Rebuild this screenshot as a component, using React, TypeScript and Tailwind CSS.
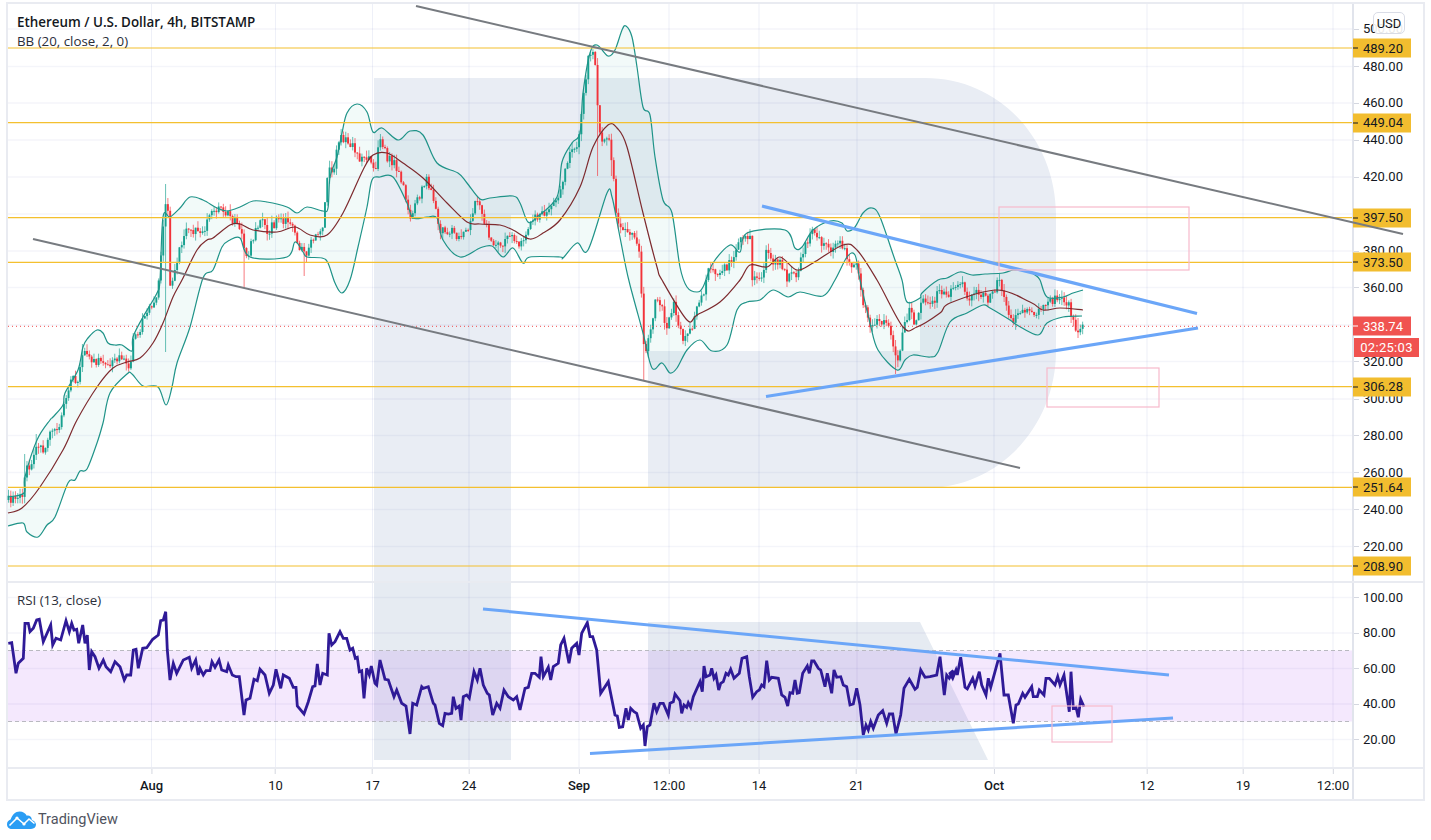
import React from 'react';

type Pt = [number, number];

const PANE_W = 1344;
const MAIN_H = 577;
const RSI_H = 184;

const gridX = [151.5, 275.5, 372.5, 469, 579, 669, 759, 857, 994, 1147, 1243, 1333];
const priceTicks: [string, number][] = [
  ['500.00', 29], ['480.00', 66.5], ['460.00', 103], ['440.00', 140], ['420.00', 177], ['380.00', 251],
  ['360.00', 287.5], ['320.00', 361.5], ['300.00', 399], ['280.00', 435.5], ['260.00', 472.5], ['240.00', 509.5], ['220.00', 546.5],
];
const gridY = [...priceTicks.map((t) => t[1]), 214, 325];
const levels: [string, number][] = [
  ['489.20', 48], ['449.04', 122.7], ['397.50', 217.7], ['373.50', 262.3], ['306.28', 386.7], ['251.64', 487.3], ['208.90', 566],
];
const rsiTicks: [string, number][] = [['100.00', 597.5], ['80.00', 633], ['60.00', 668.5], ['40.00', 704], ['20.00', 739.5]];
const timeTicks: [string, number, boolean][] = [
  ['Aug', 151.5, true], ['10', 275.5, false], ['17', 372.5, false], ['24', 469, false], ['Sep', 579, true], ['12:00', 669, false],
  ['14', 759, false], ['21', 856.5, false], ['Oct', 994, true], ['12', 1147, false], ['19', 1243, false], ['12:00', 1333, false],
];

const closeKeys: Pt[] = [
  [8, 500], [24, 498], [25, 470], [30, 467], [36, 443], [42, 447], [45, 450], [50, 430], [60, 428], [63, 407], [67, 393], [72, 377], [78, 383], [83, 350], [90, 360], [97, 363], [103, 360], [110, 367], [117, 357], [127, 365], [132, 363], [133, 337], [140, 337], [143, 317], [150, 310], [157, 293], [162, 250], [165, 205], [168, 215], [170, 290], [177, 260], [183, 237], [190, 227], [197, 233], [203, 230], [213, 213], [220, 210], [230, 217], [237, 223], [243, 240], [247, 257], [253, 237], [262, 220], [267, 233], [277, 220], [287, 220], [293, 230], [300, 250], [307, 253], [315, 233], [323, 227], [328, 167], [333, 170], [340, 137], [350, 143], [360, 160], [367, 157], [375, 170], [380, 137], [387, 157], [397, 167], [403, 187], [410, 217], [417, 200], [427, 180], [433, 197], [440, 230], [450, 230], [460, 240], [470, 227], [475, 200], [480, 207], [490, 240], [500, 247], [510, 237], [520, 247], [530, 223], [540, 213], [550, 210], [560, 193], [567, 160], [577, 147], [583, 100], [588, 60], [592, 50], [597, 80], [598, 133], [603, 143], [608, 133], [612, 160], [615, 200], [618, 227], [627, 233], [635, 233], [640, 253], [641, 287], [644, 353], [650, 337], [655, 300], [662, 307], [667, 330], [673, 303], [682, 337], [690, 333], [697, 307], [705, 287], [707, 267], [717, 277], [730, 263], [743, 237], [750, 237], [752, 277], [763, 277], [767, 247], [773, 260], [780, 263], [787, 278], [797, 273], [802, 253], [812, 233], [820, 240], [830, 250], [835, 240], [843, 247], [850, 267], [857, 263], [862, 303], [870, 323], [880, 320], [887, 323], [893, 343], [897, 360], [902, 340], [905, 320], [910, 310], [915, 323], [922, 300], [933, 303], [940, 290], [950, 293], [963, 283], [967, 300], [977, 290], [987, 300], [1000, 280], [1003, 297], [1012, 323], [1020, 313], [1030, 310], [1040, 313], [1048, 300], [1063, 300], [1070, 307], [1073, 323], [1078, 330], [1083, 326],
];

const bbUpper: Pt[] = [
  [8, 497], [24, 493], [25, 477], [37, 440], [50, 420], [53, 417], [63, 405], [65, 393], [78, 370], [83, 347], [88, 338], [97, 330], [103, 333], [108, 343], [115, 345], [122, 345], [132, 351], [133, 337], [143, 317], [157, 293], [160, 280], [163, 217], [170, 217], [180, 208], [190, 197], [203, 200], [217, 208], [227, 211], [240, 207], [253, 201], [267, 202], [287, 207], [297, 213], [307, 207], [323, 211], [328, 208], [330, 177], [337, 157], [342, 133], [347, 113], [357, 104], [367, 112], [373, 132], [382, 128], [398, 140], [410, 131], [423, 135], [437, 163], [458, 173], [467, 183], [480, 199], [490, 198], [513, 196], [520, 203], [528, 222], [537, 217], [557, 197], [562, 162], [572, 143], [580, 133], [583, 93], [590, 53], [597, 45], [608, 56], [615, 50], [622, 30], [626, 26], [632, 37], [637, 67], [643, 107], [650, 115], [655, 157], [663, 200], [672, 213], [680, 267], [687, 287], [697, 292], [703, 287], [713, 263], [730, 245], [740, 252], [747, 233], [785, 230], [795, 248], [802, 247], [813, 230], [830, 221], [842, 223], [847, 231], [855, 227], [863, 213], [872, 208], [880, 217], [895, 260], [902, 280], [907, 302], [920, 298], [922, 293], [938, 280], [947, 278], [960, 272], [972, 275], [985, 274], [1003, 273], [1013, 270], [1025, 270], [1035, 275], [1040, 280], [1047, 297], [1063, 297], [1073, 293], [1083, 290],
];
const bbLower: Pt[] = [
  [8, 526], [23, 523], [27, 532], [38, 537], [47, 525], [55, 517], [68, 483], [75, 480], [80, 471], [87, 469], [97, 443], [103, 423], [110, 393], [127, 374], [132, 374], [143, 386], [158, 387], [166, 405], [172, 387], [177, 363], [190, 327], [203, 278], [213, 270], [222, 247], [230, 240], [240, 238], [250, 257], [287, 257], [295, 242], [303, 252], [307, 257], [322, 258], [328, 263], [335, 283], [342, 293], [350, 280], [358, 247], [367, 207], [372, 180], [380, 177], [393, 177], [407, 203], [413, 218], [427, 217], [437, 218], [443, 240], [460, 257], [480, 248], [492, 246], [503, 257], [513, 248], [523, 263], [530, 257], [560, 257], [563, 258], [577, 243], [588, 250], [607, 193], [612, 197], [618, 227], [625, 263], [630, 285], [643, 333], [652, 368], [662, 363], [670, 373], [677, 368], [687, 350], [700, 340], [712, 351], [727, 345], [737, 310], [747, 302], [760, 300], [773, 290], [788, 297], [800, 292], [823, 296], [835, 280], [847, 257], [855, 255], [860, 280], [870, 323], [878, 350], [897, 370], [905, 360], [913, 355], [930, 357], [938, 352], [950, 322], [967, 313], [983, 305], [990, 308], [1010, 320], [1017, 325], [1038, 335], [1047, 323], [1063, 317], [1082, 316],
];
const bbBasis: Pt[] = [
  [8, 513], [22, 508], [40, 487], [63, 450], [77, 420], [97, 387], [113, 368], [127, 362], [140, 358], [153, 343], [163, 323], [173, 297], [182, 280], [197, 250], [207, 240], [213, 238], [230, 225], [240, 224], [253, 230], [277, 232], [295, 227], [310, 235], [327, 235], [343, 213], [363, 170], [373, 155], [387, 153], [403, 163], [423, 178], [447, 203], [467, 222], [480, 224], [500, 225], [513, 230], [530, 239], [543, 233], [560, 220], [580, 187], [593, 147], [608, 125], [617, 128], [627, 147], [643, 213], [657, 267], [662, 280], [687, 320], [697, 315], [720, 302], [740, 280], [750, 265], [767, 267], [780, 257], [797, 270], [813, 263], [843, 245], [857, 250], [877, 280], [903, 327], [917, 327], [940, 313], [950, 303], [997, 290], [1030, 302], [1043, 310], [1060, 308], [1083, 310],
];

// rsi traced in three runs of crop coordinates
const rsiA: Pt[] = [[25, 190], [35, 188], [48, 280], [55, 250], [70, 235], [75, 130], [85, 130], [90, 155], [100, 145], [110, 120], [118, 118], [130, 185], [152, 135], [158, 195], [168, 175], [182, 180], [198, 122], [208, 155], [215, 130], [222, 150], [230, 148], [236, 190], [248, 135], [255, 190], [262, 165], [268, 270], [275, 215], [285, 230], [297, 265], [310, 240], [318, 260], [332, 275], [345, 245], [360, 260], [373, 300], [380, 285], [392, 285], [400, 210], [408, 208], [415, 265], [428, 205], [440, 203], [458, 178], [475, 165], [482, 122], [490, 120], [497, 95], [502, 210], [510, 300], [520, 250], [530, 280], [550, 240], [568, 232], [575, 265], [587, 240], [595, 285], [600, 265], [610, 285], [618, 272], [630, 272], [636, 245], [645, 262], [657, 240], [665, 270], [680, 275], [685, 255], [697, 285], [708, 290], [718, 290], [732, 405], [738, 360], [750, 355], [762, 298], [772, 302], [780, 268], [795, 285], [808, 340], [820, 315], [828, 268], [842, 325], [850, 285], [868, 295], [880, 322], [888, 322], [892, 378], [912, 402], [925, 365], [938, 320], [945, 318], [952, 252], [960, 315], [968, 280], [982, 285], [987, 160], [995, 195], [1005, 185], [1020, 155], [1030, 175], [1040, 175], [1050, 210], [1058, 205], [1066, 235], [1072, 232], [1078, 275], [1085, 272], [1092, 355], [1100, 265], [1108, 285], [1114, 258], [1125, 310], [1130, 315], [1140, 240], [1155, 298], [1165, 300], [1182, 350], [1190, 330], [1205, 370], [1218, 378], [1230, 462], [1238, 370], [1250, 375], [1265, 320], [1270, 325], [1285, 320], [1300, 370], [1305, 375], [1318, 430], [1328, 437], [1335, 400], [1345, 402], [1355, 400], [1360, 350], [1368, 385], [1378, 378], [1383, 420], [1390, 350], [1400, 345], [1408, 355], [1422, 275], [1432, 300]];
const rsiB: Pt[] = [[0, 265], [10, 315], [22, 340], [28, 345], [38, 405], [50, 370], [60, 385], [72, 330], [85, 350], [100, 360], [110, 350], [120, 390], [135, 325], [145, 322], [155, 280], [165, 280], [178, 292], [183, 230], [190, 290], [205, 262], [212, 300], [220, 260], [235, 250], [242, 195], [252, 175], [267, 250], [275, 205], [290, 190], [297, 225], [305, 160], [322, 128], [330, 170], [338, 170], [350, 210], [362, 340], [385, 305], [405, 405], [412, 408], [418, 442], [428, 440], [438, 385], [445, 420], [452, 385], [462, 395], [470, 400], [482, 445], [490, 435], [495, 498], [502, 440], [510, 435], [522, 370], [530, 395], [540, 370], [550, 370], [565, 405], [570, 370], [580, 365], [585, 342], [600, 362], [605, 400], [612, 375], [620, 382], [625, 368], [632, 382], [640, 350], [660, 305], [667, 335], [672, 258], [678, 290], [690, 285], [695, 265], [702, 295], [708, 285], [716, 330], [722, 310], [730, 305], [738, 280], [745, 285], [752, 268], [762, 295], [778, 280], [786, 235], [800, 230], [808, 290], [818, 352], [830, 335], [838, 330], [845, 315], [852, 320], [860, 242], [868, 300], [875, 292], [895, 295], [905, 345], [915, 352], [923, 378], [930, 338], [938, 340], [945, 300], [952, 340], [958, 338], [968, 280], [982, 258], [988, 280], [995, 243], [1002, 243], [1015, 265], [1022, 270], [1035, 320], [1042, 280], [1055, 340], [1062, 270], [1070, 292], [1082, 290], [1090, 315], [1100, 320], [1110, 375], [1120, 372], [1130, 325], [1140, 375], [1150, 465], [1158, 435], [1165, 450], [1172, 425], [1180, 445], [1195, 405], [1208, 392], [1220, 430], [1228, 402], [1238, 402], [1248, 462], [1262, 405], [1272, 325], [1288, 298], [1305, 328], [1312, 322], [1322, 270], [1335, 292], [1350, 290], [1370, 285], [1380, 230], [1393, 345], [1400, 285], [1408, 295], [1420, 272]];
const rsiC: Pt[] = [[0, 280], [8, 295], [18, 270], [22, 285], [32, 232], [45, 322], [52, 327], [68, 295], [75, 318], [88, 275], [95, 315], [108, 345], [115, 295], [122, 322], [150, 220], [162, 345], [175, 345], [190, 430], [198, 375], [205, 372], [218, 340], [225, 352], [245, 320], [250, 350], [262, 350], [268, 330], [282, 345], [288, 295], [298, 295], [315, 315], [323, 290], [330, 315], [342, 285], [358, 395], [363, 275], [370, 385], [378, 382], [385, 412], [392, 358], [402, 380]];

const rsiLine: Pt[] = [
  ...rsiA.map(([x, y]): Pt => [x / 3, 580 + y / 3]),
  ...rsiB.map(([x, y]): Pt => [480 + x / 3, 580 + y / 3]),
  ...rsiC.map(([x, y]): Pt => [950 + x / 3, 580 + y / 3]),
];

const toPoints = (pts: Pt[]) => pts.map(([x, y]) => `${x.toFixed(1)},${y.toFixed(1)}`).join(' ');

// catmull-rom through the traced points, gives the band its soft curve
const smoothSegs = (pts: Pt[]) => {
  let d = '';
  for (let i = 0; i < pts.length - 1; i++) {
    const p0 = pts[Math.max(i - 1, 0)];
    const p1 = pts[i];
    const p2 = pts[i + 1];
    const p3 = pts[Math.min(i + 2, pts.length - 1)];
    const c1x = p1[0] + (p2[0] - p0[0]) / 6;
    const c1y = p1[1] + (p2[1] - p0[1]) / 6;
    const c2x = p2[0] - (p3[0] - p1[0]) / 6;
    const c2y = p2[1] - (p3[1] - p1[1]) / 6;
    d += `C${c1x.toFixed(1)} ${c1y.toFixed(1)} ${c2x.toFixed(1)} ${c2y.toFixed(1)} ${p2[0].toFixed(1)} ${p2[1].toFixed(1)}`;
  }
  return d;
};
const smoothPath = (pts: Pt[]) => `M${pts[0][0]} ${pts[0][1]}${smoothSegs(pts)}`;
const bandFill = () => {
  const back = [...bbLower].reverse();
  return `${smoothPath(bbUpper)}L${back[0][0]} ${back[0][1]}${smoothSegs(back)}Z`;
};

const interp = (pts: Pt[], x: number) => {
  for (let i = 1; i < pts.length; i++) {
    if (x <= pts[i][0]) {
      const [x0, y0] = pts[i - 1];
      const [x1, y1] = pts[i];
      return y0 + ((x - x0) / (x1 - x0 || 1)) * (y1 - y0);
    }
  }
  return pts[pts.length - 1][1];
};

// small seeded generator so the candles stay the same between runs
let seed = 4127;
const rnd = () => {
  seed = (seed * 16807) % 2147483647;
  return seed / 2147483647;
};

type Candle = { x: number; open: number; close: number; high: number; low: number };

const extraWicks: Record<number, number[]> = {
  166: [184, 352], 243: [232, 288], 304: [250, 276], 598: [120, 176], 644: [300, 380], 896: [340, 374], 1078: [318, 338], 83: [344, 372], 612: [150, 176], 36: [434, 460], 25: [454, 490],
};

const candles: Candle[] = [];
let prev = 500;
for (let i = 0; i < 466; i++) {
  const x = 8.5 + i * 2.31;
  const close = interp(closeKeys, x) + (rnd() - 0.5) * 9;
  let high = Math.min(prev, close) - rnd() * 7;
  let low = Math.max(prev, close) + rnd() * 7;
  Object.keys(extraWicks).forEach((k) => {
    if (Math.abs(Number(k) - x) < 1.16) {
      high = Math.min(high, extraWicks[Number(k)][0]);
      low = Math.max(low, extraWicks[Number(k)][1]);
    }
  });
  candles.push({ x, open: prev, close, high, low });
  prev = close;
}

const LOGO_MAIN = 'M374 78H925C1000 78 1056 140 1056 215V351C1056 425 1000 488 925 488H648V351H920V215H511V581H374Z';
const LOGO_RSI = 'M374 583H511V760H374Z M648 622H920L988 760H648Z';

const Grid = ({ ys, top, bottom }: { ys: number[]; top: number; bottom: number }) => (
  <g>
    {gridX.map((x) => (
      <line key={x} x1={x} x2={x} y1={top} y2={bottom} stroke="#3f4fb0" strokeOpacity={0.085} strokeWidth={1} />
    ))}
    {ys.map((y) => (
      <line key={y} x1={8} x2={1352} y1={y} y2={y} stroke="#3f4fb0" strokeOpacity={0.06} strokeWidth={1.5} />
    ))}
  </g>
);

const MainChart = () => (
  <svg width={PANE_W} height={MAIN_H} viewBox={`8 4 ${PANE_W} ${MAIN_H}`} className="block shrink-0 overflow-visible">
    <path d={LOGO_MAIN} fill="#e9edf4" />
    <Grid ys={gridY} top={4} bottom={581} />
    <path d={bandFill()} fill="#26a69a" fillOpacity={0.06} />
    {candles.map((c) => {
      const up = c.close < c.open;
      const color = up ? '#17a08f' : '#f2333a';
      return (
        <g key={c.x}>
          <line x1={c.x} x2={c.x} y1={c.high} y2={c.low} stroke={color} strokeOpacity={0.65} strokeWidth={1} />
          <rect x={c.x - 0.95} width={1.9} y={Math.min(c.open, c.close)} height={Math.max(Math.abs(c.open - c.close), 1)} fill={color} />
        </g>
      );
    })}
    <path d={smoothPath(bbUpper)} fill="none" stroke="#1f9388" strokeWidth={1.2} />
    <path d={smoothPath(bbLower)} fill="none" stroke="#1f9388" strokeWidth={1.2} />
    <path d={smoothPath(bbBasis)} fill="none" stroke="#7d2a2e" strokeWidth={1.2} />
    {levels.map(([label, y]) => (
      <line key={label} x1={8} x2={1352} y1={y} y2={y} stroke="#f4c02f" strokeWidth={1.2} />
    ))}
    <line x1={8} x2={1352} y1={326.3} y2={326.3} stroke="#ef4b4b" strokeWidth={1} strokeDasharray="1 3" />
    <line x1={416} y1={6} x2={1403} y2={234} stroke="#777b80" strokeWidth={2} />
    <line x1={33} y1={239} x2={1020} y2={468} stroke="#777b80" strokeWidth={2} />
    <line x1={762} y1={206} x2={1197} y2={313.5} stroke="#6ba6f8" strokeWidth={3.2} />
    <line x1={766} y1={396.5} x2={1198} y2={328} stroke="#6ba6f8" strokeWidth={3.2} />
    <rect x={999} y={207} width={190} height={63} fill="none" stroke="#f7b9cb" strokeWidth={1.2} />
    <rect x={1047} y={368} width={112} height={39} fill="none" stroke="#f7b9cb" strokeWidth={1.2} />
  </svg>
);

const RsiChart = () => (
  <svg width={PANE_W} height={RSI_H} viewBox={`8 583 ${PANE_W} ${RSI_H}`} className="block shrink-0">
    <path d={LOGO_RSI} fill="#e6ebf2" />
    <Grid ys={rsiTicks.map((t) => t[1])} top={583} bottom={767} />
    <rect x={8} y={650.5} width={1344} height={71} fill="#9119eb" fillOpacity={0.1} />
    <line x1={8} x2={1352} y1={650.5} y2={650.5} stroke="#b9b9c0" strokeWidth={1} strokeDasharray="4 3" />
    <line x1={8} x2={1352} y1={721.5} y2={721.5} stroke="#b9b9c0" strokeWidth={1} strokeDasharray="4 3" />
    <polyline points={toPoints(rsiLine)} fill="none" stroke="#2f1a97" strokeWidth={2.8} strokeLinejoin="miter" strokeMiterlimit={4} />
    <line x1={483} y1={609} x2={1169} y2={675} stroke="#6ba6f8" strokeWidth={3} />
    <line x1={590} y1={753.5} x2={1173} y2={718} stroke="#6ba6f8" strokeWidth={3} />
    <rect x={1052} y={706} width={60} height={36} fill="none" stroke="#f7b9cb" strokeWidth={1.2} />
  </svg>
);

const AxisTick = ({ label, y, offset }: { label: string; y: number; offset: number }) => (
  <div className="absolute left-0 flex items-center -translate-y-1/2" style={{ top: y - offset }}>
    <span className="w-[5px] h-px bg-[#d4d7e0]" />
    <span className="ml-[4px] text-[13px] leading-[16px] text-[#131722] font-['Roboto',sans-serif]">{label}</span>
  </div>
);

const LevelTag = ({ label, y, offset, bg, text }: { label: string; y: number; offset: number; bg: string; text: string }) => (
  <div className={`absolute -left-[1px] w-[58px] h-[19px] flex items-center -translate-y-1/2 ${bg} ${text}`} style={{ top: y - offset }}>
    <span className={`w-[5px] h-px ${label === '338.74' ? 'bg-white' : 'bg-[#131722]'}`} />
    <span className="ml-[5px] text-[13px] leading-[16px] font-['Roboto',sans-serif]">{label}</span>
  </div>
);

const TradingViewLogo = () => (
  <svg width={29} height={18} viewBox="0 0 29 18" className="block shrink-0">
    <path
      d="M5 18C2 18 0 16 0 13.2 0 10.8 1.5 9.2 3.6 8.6 5 4 8.4 0.5 12.6 0.5 16 0.5 18.4 2.2 19.8 4.8 21 4.4 22.4 4.6 23.4 5.6 24.4 6.6 24.8 7.8 24.8 8.9 27.2 9.6 29 11.4 29 13.6 29 16.2 27 18 24 18Z"
      fill="#2a9df4"
    />
    <polyline points="2.5,14.5 10,7 17,13 22,8 27.5,12.5" fill="none" stroke="#ffffff" strokeWidth={1.6} />
    <circle cx={10} cy={7} r={1.6} fill="#ffffff" />
    <circle cx={17} cy={13} r={1.6} fill="#ffffff" />
  </svg>
);

const App = () => (
  <div className="w-[1431px] h-[840px] bg-white overflow-hidden pl-[6px] pt-[2px] font-['Open_Sans','Noto_Sans',sans-serif] text-[#131722]">
    <div className="w-[1419px] h-[799px] border-2 border-[#e9ebf1] flex flex-col">
      <div className="flex h-[577px] border-b-0">
        <div className="relative z-10 w-[1344px]">
          <MainChart />
          <div className="absolute left-[9px] top-[9px] flex flex-col">
            <span className="text-[13.4px] leading-[19px] font-semibold">Ethereum / U.S. Dollar, 4h, BITSTAMP</span>
            <span className="text-[13.3px] leading-[19px] text-[#2a2e39]">BB (20, close, 2, 0)</span>
          </div>
        </div>
        <div className="relative flex-1 border-l-2 border-[#e1e4ec]">
          {priceTicks.map(([label, y]) => (
            <AxisTick key={label} label={label} y={y} offset={4} />
          ))}
          {levels.map(([label, y]) => (
            <LevelTag key={label} label={label} y={y} offset={4} bg="bg-[#f2bd2f]" text="text-[#131722]" />
          ))}
          <LevelTag label="338.74" y={326.3} offset={4} bg="bg-[#f05350]" text="text-white" />
          <div className="absolute left-0 top-[334px] w-[65px] h-[19px] flex items-center justify-center bg-[#f05350] text-white text-[13px] tracking-[0.3px] leading-[16px] font-['Roboto',sans-serif]">
            02:25:03
          </div>
          <div className="absolute left-[19px] top-[8px] w-[32px] h-[22px] flex items-center justify-center rounded-[5px] border border-[#d9dce6] bg-white/90 text-[13px] leading-none text-[#131722] font-['Roboto',sans-serif]">
            USD
          </div>
        </div>
      </div>
      <div className="flex h-[186px] border-t-2 border-[#e9ebf1]">
        <div className="relative w-[1344px]">
          <RsiChart />
          <span className="absolute left-[9px] top-[8px] text-[13.3px] leading-[19px] text-[#2a2e39]">RSI (13, close)</span>
        </div>
        <div className="relative flex-1 border-l-2 border-[#e1e4ec]">
          {rsiTicks.map(([label, y]) => (
            <AxisTick key={label} label={label} y={y} offset={583} />
          ))}
        </div>
      </div>
      <div className="flex h-[32px] border-t-2 border-[#e9ebf1]">
        <div className="relative w-[1344px] font-['Roboto',sans-serif]">
          {timeTicks.map(([label, x, strong]) => (
            <div key={`${label}${x}`} className="absolute top-0 flex flex-col items-center -translate-x-1/2" style={{ left: x - 8 }}>
              <span className="w-px h-[5px] bg-[#d4d7e0]" />
              <span className={`mt-[3px] text-[13px] leading-[18px] ${strong ? 'font-medium' : ''}`}>{label}</span>
            </div>
          ))}
        </div>
        <div className="flex-1 border-l-2 border-[#e1e4ec]" />
      </div>
    </div>
    <div className="mt-[9px] ml-[1px] flex items-center gap-[2px]">
      <TradingViewLogo />
      <span className="text-[14.5px] leading-[20px] text-[#50535e] font-['Roboto',sans-serif]">TradingView</span>
    </div>
  </div>
);

export default App;
